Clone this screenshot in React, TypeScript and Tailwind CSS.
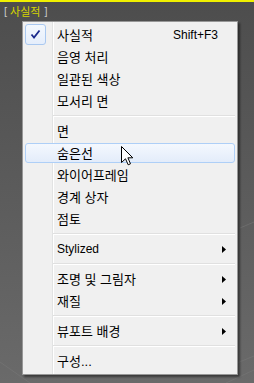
import React from 'react';

type Item =
  | { kind: 'sep' }
  | { kind: 'item'; label: string; checked?: boolean; shortcut?: string; submenu?: boolean; hover?: boolean };

const items: Item[] = [
  { kind: 'item', label: '사실적', checked: true, shortcut: 'Shift+F3' },
  { kind: 'item', label: '음영 처리' },
  { kind: 'item', label: '일관된 색상' },
  { kind: 'item', label: '모서리 면' },
  { kind: 'sep' },
  { kind: 'item', label: '면' },
  { kind: 'item', label: '숨은선', hover: true },
  { kind: 'item', label: '와이어프레임' },
  { kind: 'item', label: '경계 상자' },
  { kind: 'item', label: '점토' },
  { kind: 'sep' },
  { kind: 'item', label: 'Stylized', submenu: true },
  { kind: 'sep' },
  { kind: 'item', label: '조명 및 그림자', submenu: true },
  { kind: 'item', label: '재질', submenu: true },
  { kind: 'sep' },
  { kind: 'item', label: '뷰포트 배경', submenu: true },
  { kind: 'sep' },
  { kind: 'item', label: '구성...' },
];

// hangul labels render a touch larger than latin ones (Malgun vs Segoe)
function Label({ text }: { text: string }) {
  const hangul = /[가-힣]/.test(text);
  return <span className={hangul ? 'text-[13px]' : 'text-[12px]'}>{text}</span>;
}

function SubArrow() {
  return (
    <svg width="4" height="7" viewBox="0 0 4 7" className="ml-auto mr-[9px]">
      <path d="M0 0 L4 3.5 L0 7 Z" fill="#000" />
    </svg>
  );
}

function CheckBox() {
  return (
    <div className="absolute left-0 top-0 flex h-[21px] w-[21px] items-center justify-center rounded-[3px] border border-[#a9c8f0] bg-gradient-to-b from-[#f3f8fe] to-[#e5eefb]">
      <svg width="11" height="11" viewBox="0 0 11 11">
        <path d="M1.5 5.5 L4 8.5 L9.5 1.5" fill="none" stroke="#1a2a8c" strokeWidth="1.8" />
      </svg>
    </div>
  );
}

function MenuRow({ item }: { item: Extract<Item, { kind: 'item' }> }) {
  if (item.hover) {
    return (
      <div className="relative h-[22px] py-[1px]">
        <div className="flex h-full items-center rounded-[3px] border border-[#aecff7] bg-gradient-to-b from-[#f4f8fe] to-[#e3ecfa] pl-[31px]">
          <Label text={item.label} />
        </div>
      </div>
    );
  }
  return (
    <div className="relative flex h-[22px] items-center pl-[32px]">
      {item.checked && <CheckBox />}
      <Label text={item.label} />
      {item.shortcut && <span className="ml-auto pr-[17px]">{item.shortcut}</span>}
      {item.submenu && <SubArrow />}
    </div>
  );
}

export default function App() {
  return (
    <div className="relative h-[383px] w-[254px] overflow-hidden bg-gradient-to-b from-[#4d4d4d] to-[#6a6a6a] font-[family-name:Liberation_Sans,Noto_Sans_CJK_KR,sans-serif]">
      {/* viewport grid */}
      <svg width="254" height="383" className="absolute left-0 top-0" viewBox="0 0 254 383">
        <g stroke="#7a7a7a" strokeWidth="1" opacity="0.5">
          <line x1="0" y1="362" x2="30" y2="383" />
          <line x1="240" y1="228" x2="254" y2="222" />
          <line x1="215" y1="372" x2="254" y2="356" />
          <line x1="226" y1="383" x2="254" y2="370" />
        </g>
      </svg>

      <div className="relative h-[2px] bg-[#f0f000]" />
      <div className="relative flex h-[19px] items-center pl-[4px] text-[11px] text-[#c8c8c8]">
        <span>[</span>
        <span className="ml-[3px] font-[family-name:Noto_Sans_CJK_KR,sans-serif] text-[#d6d600]">사실적</span>
        <span className="ml-[4px]">]</span>
      </div>

      <div className="relative ml-[22px] w-[216px] border border-[#979797] bg-[#f0f0f0] p-[2px] text-[12px] leading-none text-black shadow-[2px_2px_2px_rgba(0,0,0,0.45)]">
        <div className="absolute bottom-0 left-[29px] top-0 w-[2px] border-l border-[#e2e3e3] bg-white" />
        {items.map((item, i) =>
          item.kind === 'sep' ? (
            <div key={i} className="relative h-[8px] pl-[28px] pt-[3px]">
              <div className="h-[1px] bg-[#e0e0e0]" />
              <div className="h-[1px] bg-white" />
            </div>
          ) : (
            <MenuRow key={i} item={item} />
          )
        )}
      </div>

      {/* mouse pointer */}
      <svg width="13" height="20" viewBox="0 0 13 20" className="absolute left-[121px] top-[146px]">
        <path
          d="M0.5 0.5 L0.5 16.5 L4.5 12.8 L7.2 18.8 L9.5 17.8 L6.9 11.8 L11.8 11.8 Z"
          fill="#fff"
          stroke="#000"
          strokeWidth="1"
          strokeLinejoin="miter"
        />
      </svg>
    </div>
  );
}
